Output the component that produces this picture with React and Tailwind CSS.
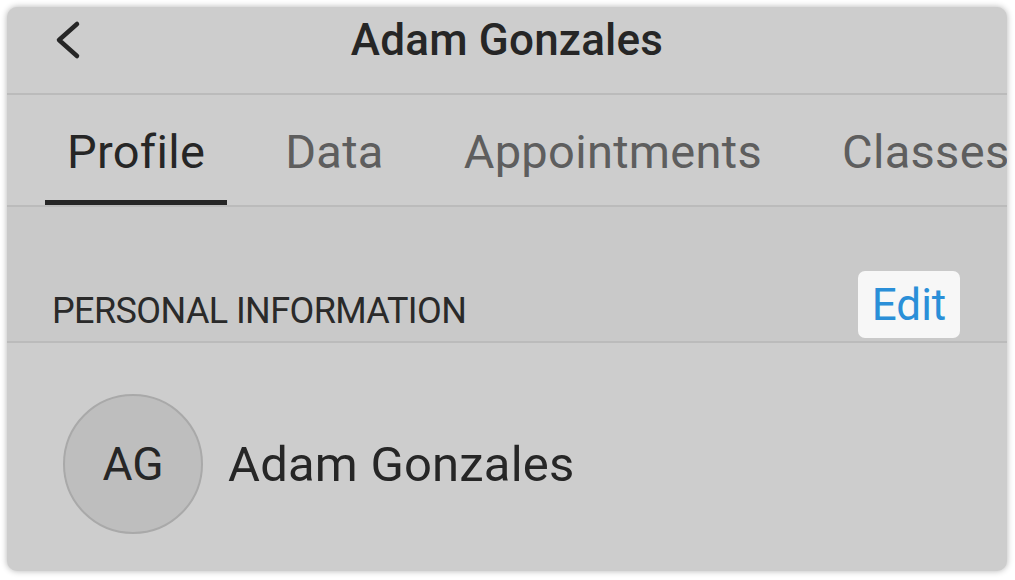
export default function App() {
  const font = { fontFamily: "Roboto, 'Noto Sans', sans-serif" };
  return (
    <div className="w-[1015px] h-[580px] bg-white p-[7px]" style={font}>
      <div className="w-[1000px] h-[564px] rounded-[10px] overflow-hidden bg-[#cdcdcd] shadow-[0_0_6px_rgba(0,0,0,0.3)] flex flex-col">
        {/* Header */}
        <div className="h-[88px] shrink-0 border-b-2 border-[#bbbbbb] grid grid-cols-[1fr_auto_1fr] items-start">
          <div className="pl-[47px] pt-[12px]">
            <svg width="28" height="42" viewBox="0 0 28 42" fill="none">
              <path d="M23 5 L5 21 L23 37" stroke="#262626" strokeWidth="4.5" strokeLinecap="round" strokeLinejoin="round" />
            </svg>
          </div>
          <div className="pt-[7px] text-[44px] leading-[52px] font-medium text-[#262626] tracking-[0.2px]">Adam Gonzales</div>
          <div />
        </div>

        {/* Tabs */}
        <div className="h-[112px] shrink-0 border-b-2 border-[#bbbbbb] flex gap-[36px] pl-[38px] overflow-hidden whitespace-nowrap">
          <div className="h-[110px] px-[22px] pt-[30px] border-b-[5px] border-[#262626] text-[47px] leading-[54px] tracking-[0.3px] text-[#262626]">Profile</div>
          <div className="h-[110px] px-[22px] pt-[30px] text-[47px] leading-[54px] tracking-[0.3px] text-[#5e5e5e]">Data</div>
          <div className="h-[110px] px-[22px] pt-[30px] text-[47px] leading-[54px] tracking-[0.3px] text-[#5e5e5e]">Appointments</div>
          <div className="h-[110px] px-[22px] pt-[30px] text-[47px] leading-[54px] tracking-[0.3px] text-[#5e5e5e]">Classes</div>
        </div>

        {/* Section header */}
        <div className="h-[136px] shrink-0 bg-[#c9c9c9] border-b-2 border-[#bbbbbb] flex items-end justify-between pl-[45px] pr-[47px] pb-[3px]">
          <div className="mb-[5px] text-[36px] leading-[44px] tracking-[-0.6px] text-[#2a2a2a]">PERSONAL INFORMATION</div>
          <div className="w-[102px] h-[67px] rounded-[7px] bg-[#f7f7f7] flex items-center justify-center text-[44px] leading-[52px] text-[#2a8fd8]">Edit</div>
        </div>

        {/* Row */}
        <div className="flex-1 flex items-start pl-[56px] pt-[51px]">
          <div className="w-[140px] h-[140px] rounded-full bg-[#bebebe] border-2 border-[#a9a9a9] flex items-center justify-center text-[46px] leading-[52px] text-[#262626]">AG</div>
          <div className="ml-[25px] h-[140px] pt-[2px] flex items-center text-[49px] leading-[56px] tracking-[0.2px] text-[#262626]">Adam Gonzales</div>
        </div>
      </div>
    </div>
  );
}
